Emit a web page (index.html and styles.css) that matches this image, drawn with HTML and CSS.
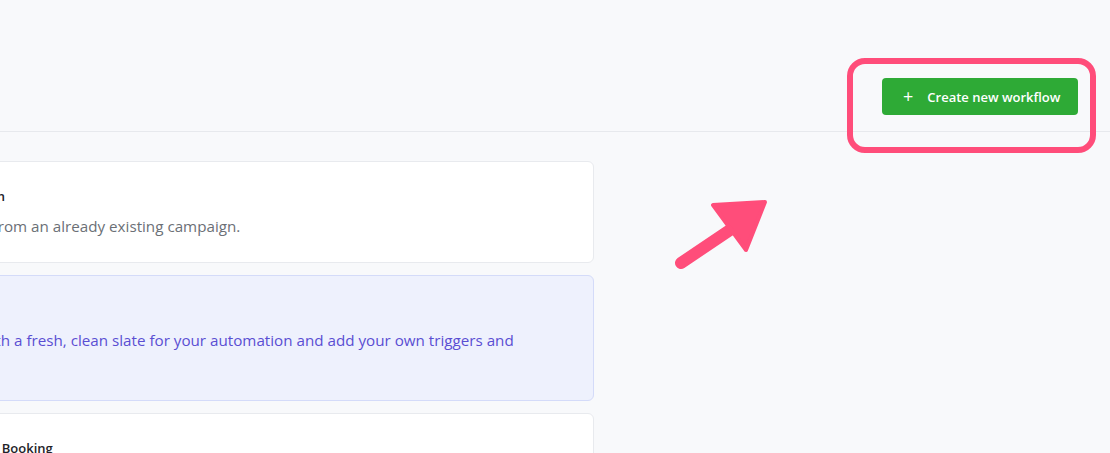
FILE: index.html
```html
<!DOCTYPE html>
<html lang="en">
<head>
<meta charset="utf-8">
<title>Workflows</title>
<link rel="stylesheet" href="styles.css">
</head>
<body>
<header class="header">
  <button class="btn-create" type="button">
    <span class="plus">+</span>
    <span>Create new workflow</span>
  </button>
</header>
<main class="content">
  <div class="list">
    <div class="card">
      <div class="card-title">Campaign</div>
      <div class="card-desc">Create from an already existing campaign.</div>
    </div>
    <div class="card card-active">
      <div class="card-title">Scratch</div>
      <div class="card-desc">Start with a fresh, clean slate for your automation and add your own triggers and<br>actions.</div>
    </div>
    <div class="card">
      <div class="card-title">Calendar Booking</div>
      <div class="card-desc">Trigger a workflow when an appointment is booked.</div>
    </div>
  </div>
</main>
<div class="highlight"></div>
<svg class="pointer" width="110" height="80" viewBox="660 190 110 80" xmlns="http://www.w3.org/2000/svg">
  <line x1="681" y1="263" x2="730" y2="230" stroke="#ff4d7a" stroke-width="12" stroke-linecap="round"/>
  <polygon points="713,205 765,202 746,250" fill="#ff4d7a" stroke="#ff4d7a" stroke-width="4" stroke-linejoin="round"/>
</svg>
</body>
</html>
```
FILE: styles.css
```css
html, body {
  margin: 0;
  padding: 0;
}
body {
  background: #f8f9fb;
  font-family: "Open Sans", "Noto Sans", Arial, sans-serif;
  width: 1110px;
  height: 453px;
  overflow: hidden;
  position: relative;
}
.header {
  display: flex;
  justify-content: flex-end;
  padding: 78px 32px 16px;
  border-bottom: 1px solid #e7e9ed;
}
.btn-create {
  display: flex;
  align-items: center;
  gap: 14px;
  height: 37px;
  width: 196px;
  padding: 0 0 0 21px;
  border: none;
  border-radius: 4px;
  background: #2eaa36;
  color: #ffffff;
  font-family: inherit;
  font-size: 13px;
  font-weight: 600;
  cursor: pointer;
}
.plus {
  font-size: 18px;
  font-weight: 400;
  line-height: 1;
  margin-top: -2px;
}
.content {
  padding-top: 29px;
}
.list {
  display: flex;
  flex-direction: column;
  gap: 12px;
  margin-left: -83px;
  width: 677px;
}
.card {
  background: #ffffff;
  border: 1px solid #e8eaee;
  border-radius: 6px;
  padding: 25px 24px 23.5px;
}
.card-title {
  font-size: 13px;
  font-weight: 600;
  line-height: 18px;
  color: #1f2328;
}
.card-desc {
  margin-top: 10px;
  font-size: 15.2px;
  line-height: 23.5px;
  color: #6b6f76;
}
.card-active {
  background: #eef1fd;
  border-color: #d4dbf9;
}
.card-active .card-title {
  color: #4b3fc9;
}
.card-active .card-desc {
  color: #5a4ed3;
}
.highlight {
  position: absolute;
  left: 847px;
  top: 58px;
  width: 237px;
  height: 83px;
  border: 6px solid #ff4d7a;
  border-radius: 18px;
}
.pointer {
  position: absolute;
  left: 660px;
  top: 190px;
}
```
